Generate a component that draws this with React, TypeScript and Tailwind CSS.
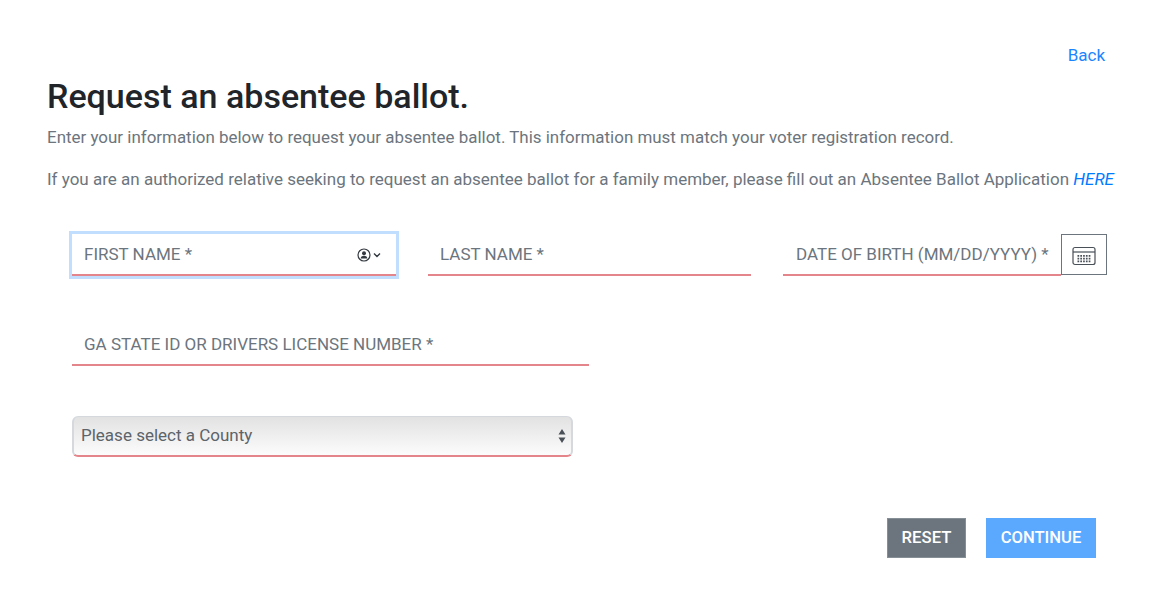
const font = "font-['Roboto',sans-serif]";

function CalendarIcon() {
  return (
    <svg width="24" height="20" viewBox="0 0 24 20" fill="none" stroke="#495057" className="mt-[2px]">
      <rect x="1" y="1.5" width="22" height="17" rx="2" strokeWidth="1.2" />
      <path d="M1 6h22" strokeWidth="1.2" />
      <path d="M5.5 9.8h13M5.5 12.6h13M5.5 15.4h13" strokeWidth="1.7" strokeDasharray="1.7 1.1" />
    </svg>
  );
}

function UserIcon() {
  return (
    <svg width="25" height="14" viewBox="0 0 25 14" fill="none" stroke="#343a40">
      <circle cx="7" cy="7" r="6" strokeWidth="1.2" />
      <circle cx="7" cy="5.2" r="2" fill="#343a40" stroke="none" />
      <path d="M3.6 10.4c.5-2 1.8-2.6 3.4-2.6s2.9.6 3.4 2.6" fill="#343a40" stroke="none" />
      <path d="M17 5.5l3 3 3-3" strokeWidth="1.4" />
    </svg>
  );
}

function Field({ label, className }: { label: string; className: string }) {
  return (
    <div className={`h-[42px] flex items-center pl-3 pt-[2px] border-b-2 border-[#e4858b] text-[17px] text-[#6c757d] ${className}`}>
      {label}
    </div>
  );
}

export default function App() {
  return (
    <div className={`${font} w-[1160px] h-[594px] overflow-hidden bg-white text-[#6c757d] pl-[47px] pr-[47px] pt-[45px]`}>
      <div className="flex justify-end pr-[8px] text-[17px] leading-5 text-[#1a85ff]">Back</div>

      <h1 className="mt-[11px] text-[34px] leading-[40px] font-medium text-[#212529]">Request an absentee ballot.</h1>
      <p className="mt-[11px] text-[16.95px] leading-5 whitespace-nowrap">
        Enter your information below to request your absentee ballot. This information must match your voter registration record.
      </p>
      <p className="mt-[22px] text-[17px] leading-5 whitespace-nowrap">
        If you are an authorized relative seeking to request an absentee ballot for a family member, please fill out an Absentee Ballot Application <em className="text-[#007bff]">HERE</em>
      </p>

      <div className="mt-[45px] ml-[25px] flex gap-[32px]">
        <div className="relative h-[42px] w-[324px]">
          <div className="absolute -inset-[3px] bg-[#c2deff]" />
          <div className="relative h-full flex items-center justify-between pl-3 pr-[14px] pt-[2px] bg-white border-b-2 border-[#e4858b] text-[17px] text-[#6c757d]">
            FIRST NAME *
            <UserIcon />
          </div>
        </div>
        <Field label="LAST NAME *" className="w-[323px]" />
        <div className="flex w-[324px]">
          <Field label="DATE OF BIRTH (MM/DD/YYYY) *" className="flex-1 whitespace-nowrap pl-[13px]" />
          <div className="w-[46px] h-[41px] flex items-center justify-center border border-[#6c757d]">
            <CalendarIcon />
          </div>
        </div>
      </div>

      <Field label="GA STATE ID OR DRIVERS LICENSE NUMBER *" className="mt-[48px] ml-[25px] w-[517px] whitespace-nowrap" />

      <div className="mt-[50px] ml-[25px] w-[501px] h-[41px] flex items-center justify-between pl-[7px] pr-[5px] rounded-[6px] border-x-2 border-t border-[#d5d9dd] border-b-2 border-b-[#e4858b] bg-gradient-to-b from-[#e2e2e2] to-[#fcfcfc] text-[17px] text-[#5c636a]">
        Please select a County
        <svg width="8" height="16" viewBox="0 0 8 16" fill="#495057">
          <path d="M4 1l3.5 5.5h-7zM4 15L.5 9.5h7z" />
        </svg>
      </div>

      <div className="mt-[61px] mr-[17px] flex justify-end gap-5">
        <button className="w-[79px] h-[40px] bg-[#6c757d] text-white text-[16.7px] font-medium border border-[#868e96]">RESET</button>
        <button className="w-[110px] h-[40px] bg-[#5aa9ff] text-white text-[16.6px] font-medium">CONTINUE</button>
      </div>
    </div>
  );
}
